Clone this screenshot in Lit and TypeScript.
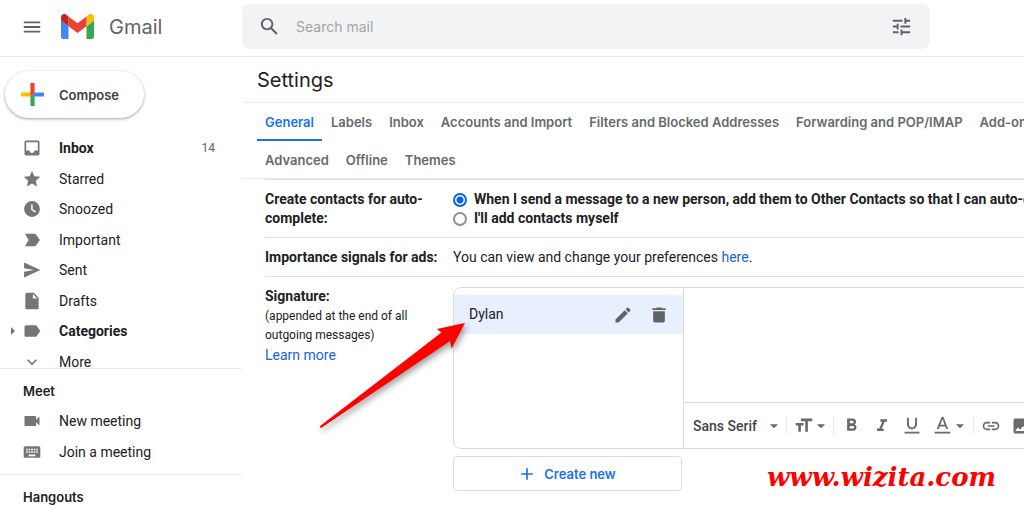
import { LitElement, html, svg, css, nothing } from "lit";
import { customElement, property } from "lit/decorators.js";
import { classMap } from "lit/directives/class-map.js";

const paths: Record<string, string> = {
  menu: "M3 18h18v-2H3v2zm0-5h18v-2H3v2zm0-7v2h18V6H3z",
  search:
    "M20.49 19l-5.73-5.73C15.53 12.2 16 10.91 16 9.5 16 5.91 13.09 3 9.5 3S3 5.91 3 9.5 5.91 16 9.5 16c1.41 0 2.7-.47 3.77-1.24L19 20.49 20.49 19zM5 9.5C5 7.01 7.01 5 9.5 5S14 7.01 14 9.5 11.99 14 9.5 14 5 11.99 5 9.5z",
  tune: "M3 17v2h6v-2H3zM3 5v2h10V5H3zm10 16v-2h8v-2h-8v-2h-2v6h2zM7 9v2H3v2h4v2h2V9H7zm14 4v-2H11v2h10zm-6-4h2V7h4V5h-4V3h-2v6z",
  inbox:
    "M19 3H5c-1.1 0-2 .9-2 2v14c0 1.1.9 2 2 2h14c1.1 0 2-.9 2-2V5c0-1.100-.9-2-2-2zm0 12h-4c0 1.660-1.350 3-3 3s-3-1.340-3-3H5V5h14v10z",
  star: "M12 17.270L18.180 21l-1.640-7.030L22 9.240l-7.190-.61L12 2 9.190 8.630 2 9.240l5.460 4.730L5.820 21z",
  clock:
    "M12 2.500a9.500 9.500 0 1 0 0 19 9.500 9.500 0 0 0 0-19zM15.800 16.300L11 13.200V6.500h1.800v5.700l4 2.600z",
  important:
    "M3.500 19.500L15 19.500c.7 0 1.300-.3 1.700-.9L21.500 12l-4.800-6.600c-.4-.5-1-.9-1.700-.9H3.500l4.500 7.500z",
  send: "M2.500 21L22 12 2.500 3v7l12 2-12 2z",
  draft:
    "M14 2H6c-1.100 0-2 .9-2 2v16c0 1.100.9 2 2 2h12c1.100 0 2-.9 2-2V8l-6-6zm-1 7V3.500L18.500 9H13z",
  label:
    "M17.630 5.840C17.270 5.330 16.670 5 16 5L5 5.010C3.900 5.010 3 5.900 3 7v10c0 1.100.9 1.990 2 1.990L16 19c.67 0 1.270-.33 1.630-.84L22 12l-4.370-6.160z",
  more: "M16.590 8.590L12 13.170 7.410 8.590 6 10l6 6 6-6z",
  video:
    "M17 10.500V7c0-.55-.45-1-1-1H4c-.55 0-1 .45-1 1v10c0 .55.45 1 1 1h12c.55 0 1-.45 1-1v-3.500l4 4v-11l-4 4z",
  keyboard:
    "M20 5H4c-1.100 0-1.990.9-1.990 2L2 17c0 1.100.9 2 2 2h16c1.100 0 2-.9 2-2V7c0-1.100-.9-2-2-2zm-9 3h2v2h-2V8zm0 3h2v2h-2v-2zM8 8h2v2H8V8zm0 3h2v2H8v-2zm-1 2H5v-2h2v2zm0-3H5V8h2v2zm9 7H8v-2h8v2zm0-4h-2v-2h2v2zm0-3h-2V8h2v2zm3 3h-2v-2h2v2zm0-3h-2V8h2v2z",
  edit: "M3 17.250V21h3.750L17.810 9.940l-3.750-3.750L3 17.250zM20.710 7.040c.39-.39.39-1.020 0-1.410l-2.340-2.340c-.39-.39-1.020-.39-1.410 0l-1.830 1.830 3.750 3.750 1.830-1.830z",
  trash: "M5 19c0 1.100.9 2 2 2h10c1.100 0 2-.9 2-2V7.500H5V19zM20 4h-4.500l-1-1h-5l-1 1H4v2h16V4z",
  plus: "M19 13h-6v6h-2v-6H5v-2h6V5h2v6h6v2z",
  size: "M9 4v3h5v12h3V7h5V4H9zm-6 8h3v7h3v-7h3V9H3v3z",
  bold: "M15.600 10.790c.97-.67 1.650-1.770 1.650-2.790 0-2.260-1.750-4-4-4H7v14h7.040c2.090 0 3.710-1.700 3.710-3.790 0-1.520-.86-2.820-2.150-3.420zM10 6.500h3c.83 0 1.500.67 1.500 1.500s-.67 1.500-1.500 1.500h-3v-3zm3.500 9H10v-3h3.500c.83 0 1.500.67 1.500 1.500s-.67 1.500-1.500 1.500z",
  italic: "M10 4v3h2.210l-3.420 8H6v3h8v-3h-2.210l3.420-8H18V4z",
  underline:
    "M12 16c3.310 0 6-2.690 6-6V2h-2.300v8c0 2.100-1.600 3.800-3.700 3.800S8.300 12.100 8.300 10V2H6v8c0 3.310 2.690 6 6 6zM3 19v2h18v-2H3z",
  color: "M11 2L5.500 16h2.250l1.120-3h6.250l1.120 3h2.250L13 2h-2zm-1.380 9L12 4.670 14.380 11H9.620zM3 19v2h18v-2H3z",
  link: "M3.900 12c0-1.710 1.390-3.100 3.100-3.100h4V7H7c-2.760 0-5 2.240-5 5s2.240 5 5 5h4v-1.900H7c-1.710 0-3.100-1.390-3.100-3.100zM8 13h8v-2H8v2zm9-6h-4v1.900h4c1.710 0 3.100 1.390 3.100 3.100s-1.390 3.100-3.100 3.100h-4V17h4c2.760 0 5-2.240 5-5s-2.240-5-5-5z",
  image:
    "M21 19V5c0-1.100-.9-2-2-2H5c-1.100 0-2 .9-2 2v14c0 1.100.9 2 2 2h14c1.100 0 2-.9 2-2zM8.500 13.500l2.500 3.010L14.500 12l4.500 6H5l3.500-4.500z",
  down: "M5 9l7 7 7-7z",
  right: "M8 4l8 8-8 8z",
};

const icon = (name: string, size = 20) => html`<svg
  class="icon"
  width=${size}
  height=${size}
  viewBox="0 0 24 24"
  aria-hidden="true"
>
  ${svg`<path fill="currentColor" d=${paths[name]} />`}
</svg>`;

const shared = css`
  * {
    box-sizing: border-box;
  }
  .icon {
    display: block;
    flex: none;
  }
  button {
    font: inherit;
    color: inherit;
    background: none;
    border: 0;
    padding: 0;
    cursor: pointer;
  }
  a {
    text-decoration: none;
  }
`;

@customElement("mail-header")
export class MailHeader extends LitElement {
  static styles = [
    shared,
    css`
      :host {
        box-sizing: border-box;
        display: flex;
        align-items: flex-start;
        height: 57px;
        padding: 4px 94px 0 0;
        border-bottom: 1px solid #ebeced;
        color: #5f6368;
      }
      .brand {
        flex: none;
        display: flex;
        align-items: center;
        width: 242px;
        height: 45px;
        padding-left: 21px;
        gap: 18px;
      }
      .logo {
        display: flex;
        align-items: center;
        gap: 15px;
        color: #5f6368;
        font: 20px/28px var(--display);
      }
      .search {
        flex: 1;
        display: flex;
        align-items: center;
        height: 45px;
        padding: 0 17px 0 16px;
        background: #f1f3f4;
        border-radius: 8px;
      }
      .search input {
        flex: 1;
        min-width: 0;
        margin-left: 15px;
        padding: 0;
        border: 0;
        outline: 0;
        background: none;
        font: 14px/20px var(--display);
        color: #202124;
      }
      .search input::placeholder {
        color: #a3a5a8;
        opacity: 1;
      }
    `,
  ];
  render() {
    return html`
      <div class="brand">
        <button aria-label="Main menu">${icon("menu", 22)}</button>
        <a class="logo" href="#inbox">
          <svg width="33" height="25" viewBox="52 42 88 66" aria-hidden="true">
            <path fill="#4285f4" d="M58 108h14V74L52 59v43c0 3.320 2.690 6 6 6" />
            <path fill="#34a853" d="M120 108h14c3.320 0 6-2.690 6-6V59l-20 15" />
            <path fill="#fbbc04" d="M120 48v26l20-15v-8c0-7.420-8.470-11.650-14.400-7.200" />
            <path fill="#ea4335" d="M72 74V48l24 18 24-18v26L96 92" />
            <path fill="#c5221f" d="M52 51v8l20 15V48l-5.600-4.200c-5.940-4.450-14.400-.22-14.400 7.200" />
          </svg>
          <span>Gmail</span>
        </a>
      </div>
      <div class="search" role="search">
        <button aria-label="Search">${icon("search", 23)}</button>
        <input type="text" aria-label="Search mail" placeholder="Search mail" />
        <button aria-label="Search options">${icon("tune", 23)}</button>
      </div>
    `;
  }
}

interface NavItem {
  icon: string;
  label: string;
  count?: number;
  strong?: boolean;
  caret?: boolean;
}

const folders: NavItem[] = [
  { icon: "inbox", label: "Inbox", count: 14, strong: true },
  { icon: "star", label: "Starred" },
  { icon: "clock", label: "Snoozed" },
  { icon: "important", label: "Important" },
  { icon: "send", label: "Sent" },
  { icon: "draft", label: "Drafts" },
  { icon: "label", label: "Categories", strong: true, caret: true },
  { icon: "more", label: "More" },
];

const meetings: NavItem[] = [
  { icon: "video", label: "New meeting" },
  { icon: "keyboard", label: "Join a meeting" },
];

@customElement("mail-sidebar")
export class MailSidebar extends LitElement {
  static styles = [
    shared,
    css`
      :host {
        display: block;
        font: 14px/20px var(--body);
        color: #202124;
      }
      .compose {
        display: flex;
        align-items: center;
        gap: 14px;
        height: 47px;
        margin: 14px 0 15px 5px;
        padding: 0 25px 0 15px;
        border-radius: 24px;
        background: #fff;
        box-shadow: 0 1px 2px rgba(60, 64, 67, 0.3), 0 1px 3px 1px rgba(60, 64, 67, 0.15);
        font: 600 13px/20px var(--display);
        color: #3c4043;
      }
      .folders {
        height: 235px;
        overflow: hidden;
      }
      .list {
        display: grid;
        grid-auto-rows: 1fr;
      }
      .folders .list {
        height: 244px;
      }
      .meet .list {
        height: 61px;
      }
      .item {
        display: grid;
        grid-template-columns: 12px 20px 1fr auto;
        align-items: center;
        padding: 0 27px 0 7px;
        color: inherit;
      }
      .item .main {
        margin-left: 3px;
        color: #757575;
      }
      .item .label {
        padding-left: 20px;
      }
      .caret {
        color: #757575;
      }
      .strong .label {
        font-weight: 700;
      }
      .count {
        font-size: 12px;
        color: #5f6368;
      }
      section {
        border-top: 1px solid #e8eaed;
      }
      .meet {
        padding-bottom: 7px;
      }
      h2 {
        margin: 0;
        padding: 12px 23px 5px;
        font: 600 13px/20px var(--display);
      }
    `,
  ];
  private row(i: NavItem) {
    return html`<a class=${classMap({ item: true, strong: !!i.strong })} href="#">
      <span class="caret">${i.caret ? icon("right", 12) : nothing}</span>
      <span class="main">${icon(i.icon, 20)}</span>
      <span class="label">${i.label}</span>
      ${i.count ? html`<span class="count">${i.count}</span>` : nothing}
    </a>`;
  }
  render() {
    return html`
      <button class="compose">
        <svg width="25" height="25" viewBox="0 0 24 24" aria-hidden="true">
          <path fill="#fbbc04" d="M1 10h9l4 0-4 4H1z" />
          <path fill="#34a853" d="M10 14l4-4v13h-4z" />
          <path fill="#4285f4" d="M14 10h9v4h-9l-2-2z" />
          <path fill="#ea4335" d="M10 1h4v9l-4 4z" />
        </svg>
        <span>Compose</span>
      </button>
      <nav class="folders" aria-label="Folders">
        <div class="list">${folders.map((f) => this.row(f))}</div>
      </nav>
      <section class="meet">
        <h2>Meet</h2>
        <div class="list">${meetings.map((m) => this.row(m))}</div>
      </section>
      <section>
        <h2>Hangouts</h2>
      </section>
    `;
  }
}

@customElement("signature-editor")
export class SignatureEditor extends LitElement {
  @property() name = "Dylan";
  static styles = [
    shared,
    css`
      :host {
        display: block;
      }
      .box {
        display: grid;
        grid-template-columns: 230px 1fr;
        min-width: 800px;
        height: 162px;
        border: 1px solid #dadce0;
        border-radius: 8px;
      }
      .names {
        padding-top: 7px;
        border-right: 1px solid #dadce0;
      }
      .entry {
        display: flex;
        align-items: center;
        height: 39px;
        padding: 0 14px 0 15px;
        gap: 16px;
        background: #e8f0fe;
        color: #202124;
      }
      .entry span {
        flex: 1;
      }
      .entry button {
        color: #5f6368;
      }
      .editor {
        display: flex;
        flex-direction: column;
      }
      .editor textarea {
        flex: 1;
        padding: 8px;
        border: 0;
        outline: 0;
        resize: none;
        background: none;
        font: inherit;
      }
      .toolbar {
        display: flex;
        align-items: center;
        height: 46px;
        padding-left: 9px;
        border-top: 1px solid #dadce0;
        color: #6a6a6a;
      }
      .font {
        display: flex;
        align-items: center;
        width: 88px;
      }
      .font select {
        appearance: none;
        flex: 1;
        min-width: 0;
        border: 0;
        padding: 0;
        background: none;
        font: 500 14px/20px var(--body);
        color: #444;
      }
      .sep {
        width: 1px;
        height: 19px;
        margin: 0 6px 0 5px;
        background: #e8eaed;
      }
      .toolbar button {
        display: flex;
        align-items: center;
      }
      .tools {
        display: flex;
        gap: 10px;
        padding: 0 1px;
      }
      .create {
        display: flex;
        align-items: center;
        justify-content: center;
        gap: 7px;
        width: 229px;
        height: 35px;
        margin-top: 7px;
        padding-right: 2px;
        border: 1px solid #dadce0;
        border-radius: 4px;
        font: 600 13px/20px var(--display);
        color: #1a73e8;
      }
    `,
  ];
  render() {
    return html`
      <div class="box">
        <div class="names">
          <div class="entry">
            <span>${this.name}</span>
            <button aria-label="Edit">${icon("edit")}</button>
            <button aria-label="Delete">${icon("trash")}</button>
          </div>
        </div>
        <div class="editor">
          <textarea aria-label="Signature text"></textarea>
          <div class="toolbar" role="toolbar">
            <div class="font">
              <select aria-label="Font">
                <option>Sans Serif</option>
              </select>
              ${icon("down", 14)}
            </div>
            <span class="sep"></span>
            <button aria-label="Size">${icon("size", 21)}${icon("down", 14)}</button>
            <span class="sep"></span>
            <div class="tools">
              <button aria-label="Bold">${icon("bold", 21)}</button>
              <button aria-label="Italic">${icon("italic")}</button>
              <button aria-label="Underline">${icon("underline")}</button>
              <button aria-label="Text colour">${icon("color", 21)}${icon("down", 14)}</button>
            </div>
            <span class="sep"></span>
            <div class="tools">
              <button aria-label="Link">${icon("link")}</button>
              <button aria-label="Insert image">${icon("image")}</button>
            </div>
          </div>
        </div>
      </div>
      <button class="create">${icon("plus", 20)}<span>Create new</span></button>
    `;
  }
}

const tabRows = [
  [
    "General",
    "Labels",
    "Inbox",
    "Accounts and Import",
    "Filters and Blocked Addresses",
    "Forwarding and POP/IMAP",
    "Add-ons",
  ],
  ["Advanced", "Offline", "Themes"],
];

@customElement("mail-settings")
export class MailSettings extends LitElement {
  static styles = [
    shared,
    css`
      :host {
        display: block;
        position: relative;
        overflow: hidden;
        font: 14px/19px var(--body);
        color: #202124;
      }
      h1 {
        margin: 0;
        padding: 10px 15px 9px;
        border-bottom: 1px solid #e8eaed;
        font: 20px/26px var(--display);
      }
      .tabs {
        height: 76px;
        border-bottom: 1px solid #e8eaed;
        padding-left: 15px;
      }
      .line {
        display: flex;
        gap: 1px;
        height: 38px;
        overflow: hidden;
      }
      .tab {
        flex: none;
        padding: 9px 8px 0;
        color: #666a6e;
        border-bottom: 2px solid transparent;
        font: 600 13px/20px var(--display);
      }
      .tab.on {
        color: #1a73e8;
        border-color: #1a73e8;
      }
      .rows {
        padding-left: 23px;
      }
      .row {
        display: grid;
        grid-template-columns: 174px minmax(0, 1fr);
        column-gap: 14px;
        padding: 10px 0 9px;
        border-top: 1px solid #e0e0e0;
      }
      .row h2 {
        margin: 0;
        font: 700 14px/19px var(--body);
      }
      .row p {
        margin: 0;
      }
      .row .hint {
        margin: 1px 0;
        font-size: 12px;
      }
      a.link {
        color: #1a5fdc;
      }
      label {
        display: flex;
        align-items: center;
        gap: 7px;
        font-weight: 700;
        white-space: nowrap;
      }
      input[type="radio"] {
        appearance: none;
        flex: none;
        width: 14px;
        height: 14px;
        margin: 0;
        border: 2px solid #8f8f9d;
        border-radius: 50%;
        background: #fff;
      }
      input[type="radio"]:checked {
        border-color: #0b60e8;
        background: radial-gradient(circle, #0b60e8 0 3px, #fff 4px);
      }
      .pointer {
        position: absolute;
        left: 70px;
        top: 260px;
        filter: drop-shadow(2px 3px 3px rgba(0, 0, 0, 0.4));
        pointer-events: none;
      }
      .mark {
        position: absolute;
        right: 28px;
        bottom: 18px;
        font: italic 700 26px/34px "DejaVu Serif", serif;
        color: #f00;
      }
    `,
  ];
  render() {
    return html`
      <h1>Settings</h1>
      <nav class="tabs" aria-label="Settings sections">
        ${tabRows.map(
          (line) => html`<div class="line">
            ${line.map(
              (t) => html`<a class=${classMap({ tab: true, on: t === "General" })} href="#">${t}</a>`
            )}
          </div>`
        )}
      </nav>
      <div class="rows">
        <div class="row">
          <h2>Create contacts for auto-complete:</h2>
          <div>
            <label
              ><input type="radio" name="contacts" checked />When I send a message to a new person, add them to
              Other Contacts so that I can auto-complete to them next time</label
            >
            <label><input type="radio" name="contacts" />I'll add contacts myself</label>
          </div>
        </div>
        <div class="row">
          <h2>Importance signals for ads:</h2>
          <p>You can view and change your preferences <a class="link" href="#">here</a>.</p>
        </div>
        <div class="row">
          <div>
            <h2>Signature:</h2>
            <p class="hint">(appended at the end of all outgoing messages)</p>
            <a class="link" href="#">Learn more</a>
          </div>
          <signature-editor></signature-editor>
        </div>
      </div>
      <svg class="pointer" width="160" height="120" viewBox="0 0 160 120" aria-hidden="true">
        <path fill="#f00" d="M153 6L125 12l4.500 3.500L7.500 109.500l1.500 1.500L138 24l1.500 7.500z" />
      </svg>
      <span class="mark">www.wizita.com</span>
    `;
  }
}

@customElement("app-root")
export class AppRoot extends LitElement {
  static styles = css`
    :host {
      --display: "Inter", "Roboto", sans-serif;
      --body: "Roboto", "Liberation Sans", sans-serif;
      display: flex;
      flex-direction: column;
      height: 100vh;
      overflow: hidden;
      background: #fff;
    }
    .body {
      flex: 1;
      min-height: 0;
      display: grid;
      grid-template-columns: 242px minmax(0, 1fr);
    }
  `;
  render() {
    return html`
      <mail-header></mail-header>
      <div class="body">
        <mail-sidebar></mail-sidebar>
        <mail-settings></mail-settings>
      </div>
    `;
  }
}
